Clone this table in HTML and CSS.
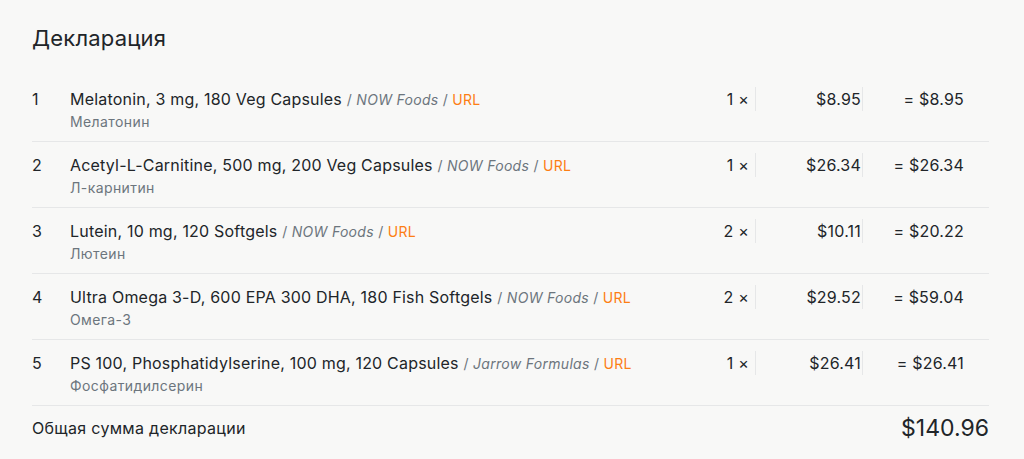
FILE: index.html
```html
<!DOCTYPE html>
<html lang="ru">
<head>
<meta charset="UTF-8">
<meta name="viewport" content="width=device-width, initial-scale=1.0">
<title>Декларация</title>
<link rel="stylesheet" href="styles.css">
</head>
<body>
    <div class="declaration">
        <h2>Декларация</h2>

        <div class="items">
            <div class="item">
                <div class="num">1</div>
                <div class="info">
                    <div class="title">Melatonin, 3 mg, 180 Veg Capsules <span class="meta">/ <i>NOW Foods</i> / <a href="#">URL</a></span></div>
                    <div class="ru">Мелатонин</div>
                </div>
                <div class="qty">1 ×</div>
                <div class="price">$8.95</div>
                <div class="sum">= $8.95</div>
            </div>
            <div class="item">
                <div class="num">2</div>
                <div class="info">
                    <div class="title">Acetyl-L-Carnitine, 500 mg, 200 Veg Capsules <span class="meta">/ <i>NOW Foods</i> / <a href="#">URL</a></span></div>
                    <div class="ru">Л-карнитин</div>
                </div>
                <div class="qty">1 ×</div>
                <div class="price">$26.34</div>
                <div class="sum">= $26.34</div>
            </div>
            <div class="item">
                <div class="num">3</div>
                <div class="info">
                    <div class="title">Lutein, 10 mg, 120 Softgels <span class="meta">/ <i>NOW Foods</i> / <a href="#">URL</a></span></div>
                    <div class="ru">Лютеин</div>
                </div>
                <div class="qty">2 ×</div>
                <div class="price">$10.11</div>
                <div class="sum">= $20.22</div>
            </div>
            <div class="item">
                <div class="num">4</div>
                <div class="info">
                    <div class="title">Ultra Omega 3-D, 600 EPA 300 DHA, 180 Fish Softgels <span class="meta">/ <i>NOW Foods</i> / <a href="#">URL</a></span></div>
                    <div class="ru">Омега-3</div>
                </div>
                <div class="qty">2 ×</div>
                <div class="price">$29.52</div>
                <div class="sum">= $59.04</div>
            </div>
            <div class="item">
                <div class="num">5</div>
                <div class="info">
                    <div class="title">PS 100, Phosphatidylserine, 100 mg, 120 Capsules <span class="meta">/ <i>Jarrow Formulas</i> / <a href="#">URL</a></span></div>
                    <div class="ru">Фосфатидилсерин</div>
                </div>
                <div class="qty">1 ×</div>
                <div class="price">$26.41</div>
                <div class="sum">= $26.41</div>
            </div>
        </div>

        <div class="total">
            <span>Общая сумма декларации</span>
            <span class="total-value">$140.96</span>
        </div>
    </div>
</body>
</html>
```

FILE: styles.css
```css
body {
font-family: Inter, "Noto Sans", sans-serif;
background-color: #f8f8f7;
color: #212529;
letter-spacing: 0.2px;
margin: 0;
padding: 0;
}

.declaration {
padding: 0 35px 0 32px;
}

h2 {
margin: 0;
padding-top: 24px;
height: 52px;
font-size: 22px;
font-weight: 400;
line-height: 28px;
}

.item {
display: flex;
align-items: flex-start;
padding: 11px 0 8px;
border-bottom: 1px solid #e6e7e8;
}

.num {
width: 38px;
font-size: 16px;
line-height: 24px;
}

.info {
flex: 1;
}

.title {
font-size: 16px;
line-height: 24px;
height: 24px;
}

.meta {
font-size: 14px;
line-height: 1;
letter-spacing: 0.3px;
color: #6c757d;
}

.meta a {
color: #fd7e14;
text-decoration: none;
}

.ru {
font-size: 14px;
line-height: 22px;
letter-spacing: 0.4px;
color: #6c757d;
}

.qty,
.price,
.sum {
font-size: 16px;
line-height: 24px;
text-align: right;
}

.qty {
padding-right: 6px;
border-right: 1px solid #e6e7e8;
}

.price {
width: 105px;
padding-right: 1px;
border-right: 1px solid #e6e7e8;
}

.sum {
width: 101px;
padding-right: 25px;
}

.total {
display: flex;
justify-content: space-between;
align-items: center;
padding-top: 7px;
font-size: 16px;
letter-spacing: 0.3px;
}

.total-value {
font-size: 23px;
line-height: 30px;
letter-spacing: 0;
}
```
